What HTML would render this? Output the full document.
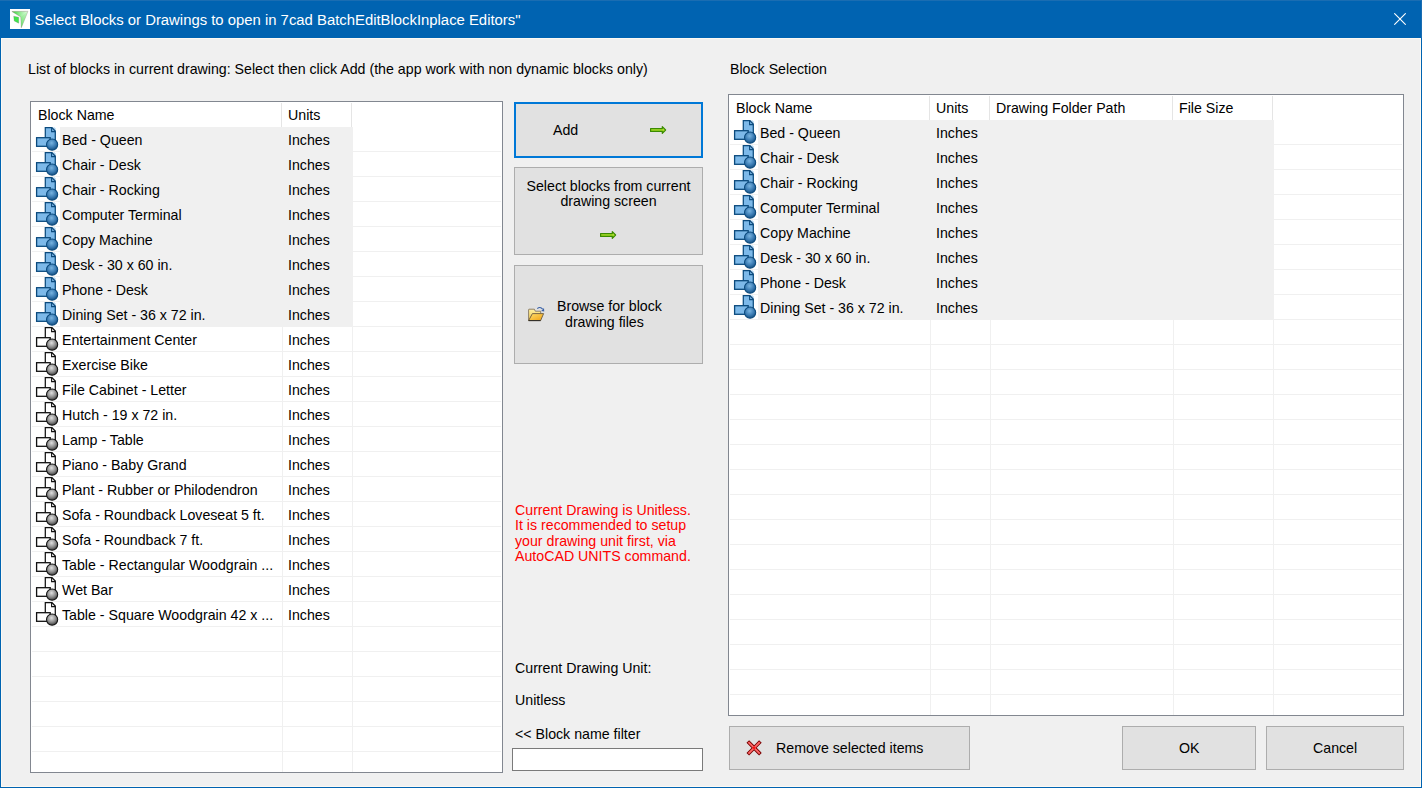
<!DOCTYPE html><html><head><meta charset="utf-8"><style>
*{margin:0;padding:0;box-sizing:border-box}
html,body{width:1422px;height:788px;overflow:hidden;background:#f0f0f0}
body{position:relative;font-family:"Liberation Sans",sans-serif;font-size:14.2px;color:#000}
.a{position:absolute;white-space:pre}
.win{position:absolute;left:0;top:0;width:1422px;height:788px;border:1px solid #0063b1;border-top:none;background:#f0f0f0}
.title{position:absolute;left:0;top:0;width:1422px;height:38px;background:#0063b1}
.lv{position:absolute;background:#fff;border:1px solid #828790;overflow:hidden}
.gl{position:absolute;height:1px;background:#f0f0f0}
.vs{position:absolute;width:1px;background:#e5e5e5}
.sel{position:absolute;background:#f0f0f0}
.btn{position:absolute;background:#e1e1e1;border:1px solid #adadad}
.t{position:absolute;white-space:pre;line-height:16px}
</style></head><body>
<svg width="0" height="0" style="position:absolute"><defs>
<radialGradient id="gb" cx="0.45" cy="0.35" r="0.65"><stop offset="0" stop-color="#79b4e0"/><stop offset="0.6" stop-color="#3a7bb3"/><stop offset="1" stop-color="#164f80"/></radialGradient>
<radialGradient id="gg" cx="0.45" cy="0.35" r="0.65"><stop offset="0" stop-color="#e0e0e0"/><stop offset="0.6" stop-color="#8a8a8a"/><stop offset="1" stop-color="#3a3a3a"/></radialGradient>
<linearGradient id="ag" x1="0" y1="0" x2="0" y2="1"><stop offset="0" stop-color="#d8f850"/><stop offset="1" stop-color="#7cc400"/></linearGradient>
</defs></svg>
<div class="win"></div>
<div class="title"></div>
<div class="a" style="left:0;top:0;width:1422px;height:1px;background:#1a6db2"></div>
<div class="a" style="left:1421px;top:0;width:1px;height:38px;background:#1a6db2"></div>
<div class="a" style="left:1px;top:38px;width:1420px;height:749px;border:1px solid #fcf9f3"></div>
<div class="a" style="left:10px;top:9px;width:20px;height:20px;background:#fff"></div>
<svg class="a" style="left:10px;top:9px" width="20" height="20" viewBox="0 0 20 20"><defs><linearGradient id="tg" x1="0.1" y1="0.2" x2="0.9" y2="0.3"><stop offset="0" stop-color="#48dc48"/><stop offset="0.45" stop-color="#8eea8e"/><stop offset="1" stop-color="#d8f8d8"/></linearGradient><linearGradient id="tg2" x1="0" y1="0" x2="0" y2="1"><stop offset="0" stop-color="#b8f4b8"/><stop offset="1" stop-color="#30d030"/></linearGradient></defs><path d="M1.9 2.5 L17.9 2.3 L11.3 18.7 L10.8 7.9 Z" fill="url(#tg)" stroke="#806a6a" stroke-width="0.35"/><path d="M10.8 7.9 L17.9 2.3 L11.3 18.7 Z" fill="url(#tg2)" opacity="0.55"/><path d="M3.7 7.2 L8.7 8.3 L8.7 14.2 L4.25 11.9 Z" fill="#3ee64a" stroke="#6a7a6a" stroke-width="0.3"/></svg>
<div class="t" style="left:34.5px;top:12px;font-size:14.87px;color:#fff">Select Blocks or Drawings to open in 7cad BatchEditBlockInplace Editors"</div>
<svg class="a" style="left:1394px;top:13px" width="12" height="12" viewBox="0 0 12 12"><path d="M0.3 0.3 L11.7 11.7 M11.7 0.3 L0.3 11.7" stroke="#fff" stroke-width="1.1"/></svg>
<div class="t" style="left:28px;top:61px">List of blocks in current drawing: Select then click Add (the app work with non dynamic blocks only)</div>
<div class="t" style="left:730px;top:61px">Block Selection</div>
<div class="lv" style="left:30px;top:101px;width:473px;height:672px">
<div class="t" style="left:7px;top:5px">Block Name</div>
<div class="t" style="left:257px;top:5px">Units</div>
<div class="vs" style="left:250px;top:1px;height:24px"></div>
<div class="vs" style="left:320px;top:1px;height:24px"></div>
<div class="gl" style="left:1px;top:49px;width:469px"></div>
<div class="vs" style="left:251px;top:25px;height:25px;background:#f0f0f0"></div>
<div class="vs" style="left:321px;top:25px;height:25px;background:#f0f0f0"></div>
<div class="gl" style="left:1px;top:74px;width:469px"></div>
<div class="vs" style="left:251px;top:50px;height:25px;background:#f0f0f0"></div>
<div class="vs" style="left:321px;top:50px;height:25px;background:#f0f0f0"></div>
<div class="gl" style="left:1px;top:99px;width:469px"></div>
<div class="vs" style="left:251px;top:75px;height:25px;background:#f0f0f0"></div>
<div class="vs" style="left:321px;top:75px;height:25px;background:#f0f0f0"></div>
<div class="gl" style="left:1px;top:124px;width:469px"></div>
<div class="vs" style="left:251px;top:100px;height:25px;background:#f0f0f0"></div>
<div class="vs" style="left:321px;top:100px;height:25px;background:#f0f0f0"></div>
<div class="gl" style="left:1px;top:149px;width:469px"></div>
<div class="vs" style="left:251px;top:125px;height:25px;background:#f0f0f0"></div>
<div class="vs" style="left:321px;top:125px;height:25px;background:#f0f0f0"></div>
<div class="gl" style="left:1px;top:174px;width:469px"></div>
<div class="vs" style="left:251px;top:150px;height:25px;background:#f0f0f0"></div>
<div class="vs" style="left:321px;top:150px;height:25px;background:#f0f0f0"></div>
<div class="gl" style="left:1px;top:199px;width:469px"></div>
<div class="vs" style="left:251px;top:175px;height:25px;background:#f0f0f0"></div>
<div class="vs" style="left:321px;top:175px;height:25px;background:#f0f0f0"></div>
<div class="gl" style="left:1px;top:224px;width:469px"></div>
<div class="vs" style="left:251px;top:200px;height:25px;background:#f0f0f0"></div>
<div class="vs" style="left:321px;top:200px;height:25px;background:#f0f0f0"></div>
<div class="gl" style="left:1px;top:249px;width:469px"></div>
<div class="vs" style="left:251px;top:225px;height:25px;background:#f0f0f0"></div>
<div class="vs" style="left:321px;top:225px;height:25px;background:#f0f0f0"></div>
<div class="gl" style="left:1px;top:274px;width:469px"></div>
<div class="vs" style="left:251px;top:250px;height:25px;background:#f0f0f0"></div>
<div class="vs" style="left:321px;top:250px;height:25px;background:#f0f0f0"></div>
<div class="gl" style="left:1px;top:299px;width:469px"></div>
<div class="vs" style="left:251px;top:275px;height:25px;background:#f0f0f0"></div>
<div class="vs" style="left:321px;top:275px;height:25px;background:#f0f0f0"></div>
<div class="gl" style="left:1px;top:324px;width:469px"></div>
<div class="vs" style="left:251px;top:300px;height:25px;background:#f0f0f0"></div>
<div class="vs" style="left:321px;top:300px;height:25px;background:#f0f0f0"></div>
<div class="gl" style="left:1px;top:349px;width:469px"></div>
<div class="vs" style="left:251px;top:325px;height:25px;background:#f0f0f0"></div>
<div class="vs" style="left:321px;top:325px;height:25px;background:#f0f0f0"></div>
<div class="gl" style="left:1px;top:374px;width:469px"></div>
<div class="vs" style="left:251px;top:350px;height:25px;background:#f0f0f0"></div>
<div class="vs" style="left:321px;top:350px;height:25px;background:#f0f0f0"></div>
<div class="gl" style="left:1px;top:399px;width:469px"></div>
<div class="vs" style="left:251px;top:375px;height:25px;background:#f0f0f0"></div>
<div class="vs" style="left:321px;top:375px;height:25px;background:#f0f0f0"></div>
<div class="gl" style="left:1px;top:424px;width:469px"></div>
<div class="vs" style="left:251px;top:400px;height:25px;background:#f0f0f0"></div>
<div class="vs" style="left:321px;top:400px;height:25px;background:#f0f0f0"></div>
<div class="gl" style="left:1px;top:449px;width:469px"></div>
<div class="vs" style="left:251px;top:425px;height:25px;background:#f0f0f0"></div>
<div class="vs" style="left:321px;top:425px;height:25px;background:#f0f0f0"></div>
<div class="gl" style="left:1px;top:474px;width:469px"></div>
<div class="vs" style="left:251px;top:450px;height:25px;background:#f0f0f0"></div>
<div class="vs" style="left:321px;top:450px;height:25px;background:#f0f0f0"></div>
<div class="gl" style="left:1px;top:499px;width:469px"></div>
<div class="vs" style="left:251px;top:475px;height:25px;background:#f0f0f0"></div>
<div class="vs" style="left:321px;top:475px;height:25px;background:#f0f0f0"></div>
<div class="gl" style="left:1px;top:524px;width:469px"></div>
<div class="vs" style="left:251px;top:500px;height:25px;background:#f0f0f0"></div>
<div class="vs" style="left:321px;top:500px;height:25px;background:#f0f0f0"></div>
<div class="gl" style="left:1px;top:549px;width:469px"></div>
<div class="vs" style="left:251px;top:525px;height:25px;background:#f0f0f0"></div>
<div class="vs" style="left:321px;top:525px;height:25px;background:#f0f0f0"></div>
<div class="gl" style="left:1px;top:574px;width:469px"></div>
<div class="vs" style="left:251px;top:550px;height:25px;background:#f0f0f0"></div>
<div class="vs" style="left:321px;top:550px;height:25px;background:#f0f0f0"></div>
<div class="gl" style="left:1px;top:599px;width:469px"></div>
<div class="vs" style="left:251px;top:575px;height:25px;background:#f0f0f0"></div>
<div class="vs" style="left:321px;top:575px;height:25px;background:#f0f0f0"></div>
<div class="gl" style="left:1px;top:624px;width:469px"></div>
<div class="vs" style="left:251px;top:600px;height:25px;background:#f0f0f0"></div>
<div class="vs" style="left:321px;top:600px;height:25px;background:#f0f0f0"></div>
<div class="gl" style="left:1px;top:649px;width:469px"></div>
<div class="vs" style="left:251px;top:625px;height:25px;background:#f0f0f0"></div>
<div class="vs" style="left:321px;top:625px;height:25px;background:#f0f0f0"></div>
<div class="gl" style="left:1px;top:674px;width:469px"></div>
<div class="vs" style="left:251px;top:650px;height:25px;background:#f0f0f0"></div>
<div class="vs" style="left:321px;top:650px;height:25px;background:#f0f0f0"></div>
<div class="gl" style="left:1px;top:699px;width:469px"></div>
<div class="vs" style="left:251px;top:675px;height:25px;background:#f0f0f0"></div>
<div class="vs" style="left:321px;top:675px;height:25px;background:#f0f0f0"></div>
<div class="sel" style="left:29px;top:25px;width:293px;height:24px"></div>
<svg class="a" style="left:0px;top:25px" width="28" height="25" viewBox="0 0 28 25"><path d="M14.3 17 V0.7 H21 L24.3 4 V15 Z" fill="#7db9e9"/><path d="M22.6 0.3 L24.9 2.4" stroke="#8cc4f0" stroke-width="1"/><path d="M14.3 17 V0.7 H21 L24.3 4 V15" fill="none" stroke="#0b4a7d" stroke-width="1.25"/><path d="M20.6 0.7 V4.6 H24.3" fill="none" stroke="#0b4a7d" stroke-width="1.1"/><rect x="5.6" y="10.7" width="13.6" height="8.6" fill="#7db9e9" stroke="#0b4a7d" stroke-width="1.3"/><circle cx="21.1" cy="17.6" r="5.6" fill="url(#gb)" stroke="#0b4a7d" stroke-width="1.05"/></svg>
<div class="t" style="left:31px;top:30px">Bed - Queen</div>
<div class="t" style="left:257px;top:30px">Inches</div>
<div class="sel" style="left:29px;top:50px;width:293px;height:24px"></div>
<svg class="a" style="left:0px;top:50px" width="28" height="25" viewBox="0 0 28 25"><path d="M14.3 17 V0.7 H21 L24.3 4 V15 Z" fill="#7db9e9"/><path d="M22.6 0.3 L24.9 2.4" stroke="#8cc4f0" stroke-width="1"/><path d="M14.3 17 V0.7 H21 L24.3 4 V15" fill="none" stroke="#0b4a7d" stroke-width="1.25"/><path d="M20.6 0.7 V4.6 H24.3" fill="none" stroke="#0b4a7d" stroke-width="1.1"/><rect x="5.6" y="10.7" width="13.6" height="8.6" fill="#7db9e9" stroke="#0b4a7d" stroke-width="1.3"/><circle cx="21.1" cy="17.6" r="5.6" fill="url(#gb)" stroke="#0b4a7d" stroke-width="1.05"/></svg>
<div class="t" style="left:31px;top:55px">Chair - Desk</div>
<div class="t" style="left:257px;top:55px">Inches</div>
<div class="sel" style="left:29px;top:75px;width:293px;height:24px"></div>
<svg class="a" style="left:0px;top:75px" width="28" height="25" viewBox="0 0 28 25"><path d="M14.3 17 V0.7 H21 L24.3 4 V15 Z" fill="#7db9e9"/><path d="M22.6 0.3 L24.9 2.4" stroke="#8cc4f0" stroke-width="1"/><path d="M14.3 17 V0.7 H21 L24.3 4 V15" fill="none" stroke="#0b4a7d" stroke-width="1.25"/><path d="M20.6 0.7 V4.6 H24.3" fill="none" stroke="#0b4a7d" stroke-width="1.1"/><rect x="5.6" y="10.7" width="13.6" height="8.6" fill="#7db9e9" stroke="#0b4a7d" stroke-width="1.3"/><circle cx="21.1" cy="17.6" r="5.6" fill="url(#gb)" stroke="#0b4a7d" stroke-width="1.05"/></svg>
<div class="t" style="left:31px;top:80px">Chair - Rocking</div>
<div class="t" style="left:257px;top:80px">Inches</div>
<div class="sel" style="left:29px;top:100px;width:293px;height:24px"></div>
<svg class="a" style="left:0px;top:100px" width="28" height="25" viewBox="0 0 28 25"><path d="M14.3 17 V0.7 H21 L24.3 4 V15 Z" fill="#7db9e9"/><path d="M22.6 0.3 L24.9 2.4" stroke="#8cc4f0" stroke-width="1"/><path d="M14.3 17 V0.7 H21 L24.3 4 V15" fill="none" stroke="#0b4a7d" stroke-width="1.25"/><path d="M20.6 0.7 V4.6 H24.3" fill="none" stroke="#0b4a7d" stroke-width="1.1"/><rect x="5.6" y="10.7" width="13.6" height="8.6" fill="#7db9e9" stroke="#0b4a7d" stroke-width="1.3"/><circle cx="21.1" cy="17.6" r="5.6" fill="url(#gb)" stroke="#0b4a7d" stroke-width="1.05"/></svg>
<div class="t" style="left:31px;top:105px">Computer Terminal</div>
<div class="t" style="left:257px;top:105px">Inches</div>
<div class="sel" style="left:29px;top:125px;width:293px;height:24px"></div>
<svg class="a" style="left:0px;top:125px" width="28" height="25" viewBox="0 0 28 25"><path d="M14.3 17 V0.7 H21 L24.3 4 V15 Z" fill="#7db9e9"/><path d="M22.6 0.3 L24.9 2.4" stroke="#8cc4f0" stroke-width="1"/><path d="M14.3 17 V0.7 H21 L24.3 4 V15" fill="none" stroke="#0b4a7d" stroke-width="1.25"/><path d="M20.6 0.7 V4.6 H24.3" fill="none" stroke="#0b4a7d" stroke-width="1.1"/><rect x="5.6" y="10.7" width="13.6" height="8.6" fill="#7db9e9" stroke="#0b4a7d" stroke-width="1.3"/><circle cx="21.1" cy="17.6" r="5.6" fill="url(#gb)" stroke="#0b4a7d" stroke-width="1.05"/></svg>
<div class="t" style="left:31px;top:130px">Copy Machine</div>
<div class="t" style="left:257px;top:130px">Inches</div>
<div class="sel" style="left:29px;top:150px;width:293px;height:24px"></div>
<svg class="a" style="left:0px;top:150px" width="28" height="25" viewBox="0 0 28 25"><path d="M14.3 17 V0.7 H21 L24.3 4 V15 Z" fill="#7db9e9"/><path d="M22.6 0.3 L24.9 2.4" stroke="#8cc4f0" stroke-width="1"/><path d="M14.3 17 V0.7 H21 L24.3 4 V15" fill="none" stroke="#0b4a7d" stroke-width="1.25"/><path d="M20.6 0.7 V4.6 H24.3" fill="none" stroke="#0b4a7d" stroke-width="1.1"/><rect x="5.6" y="10.7" width="13.6" height="8.6" fill="#7db9e9" stroke="#0b4a7d" stroke-width="1.3"/><circle cx="21.1" cy="17.6" r="5.6" fill="url(#gb)" stroke="#0b4a7d" stroke-width="1.05"/></svg>
<div class="t" style="left:31px;top:155px">Desk - 30 x 60 in.</div>
<div class="t" style="left:257px;top:155px">Inches</div>
<div class="sel" style="left:29px;top:175px;width:293px;height:24px"></div>
<svg class="a" style="left:0px;top:175px" width="28" height="25" viewBox="0 0 28 25"><path d="M14.3 17 V0.7 H21 L24.3 4 V15 Z" fill="#7db9e9"/><path d="M22.6 0.3 L24.9 2.4" stroke="#8cc4f0" stroke-width="1"/><path d="M14.3 17 V0.7 H21 L24.3 4 V15" fill="none" stroke="#0b4a7d" stroke-width="1.25"/><path d="M20.6 0.7 V4.6 H24.3" fill="none" stroke="#0b4a7d" stroke-width="1.1"/><rect x="5.6" y="10.7" width="13.6" height="8.6" fill="#7db9e9" stroke="#0b4a7d" stroke-width="1.3"/><circle cx="21.1" cy="17.6" r="5.6" fill="url(#gb)" stroke="#0b4a7d" stroke-width="1.05"/></svg>
<div class="t" style="left:31px;top:180px">Phone - Desk</div>
<div class="t" style="left:257px;top:180px">Inches</div>
<div class="sel" style="left:29px;top:200px;width:293px;height:24px"></div>
<svg class="a" style="left:0px;top:200px" width="28" height="25" viewBox="0 0 28 25"><path d="M14.3 17 V0.7 H21 L24.3 4 V15 Z" fill="#7db9e9"/><path d="M22.6 0.3 L24.9 2.4" stroke="#8cc4f0" stroke-width="1"/><path d="M14.3 17 V0.7 H21 L24.3 4 V15" fill="none" stroke="#0b4a7d" stroke-width="1.25"/><path d="M20.6 0.7 V4.6 H24.3" fill="none" stroke="#0b4a7d" stroke-width="1.1"/><rect x="5.6" y="10.7" width="13.6" height="8.6" fill="#7db9e9" stroke="#0b4a7d" stroke-width="1.3"/><circle cx="21.1" cy="17.6" r="5.6" fill="url(#gb)" stroke="#0b4a7d" stroke-width="1.05"/></svg>
<div class="t" style="left:31px;top:205px">Dining Set - 36 x 72 in.</div>
<div class="t" style="left:257px;top:205px">Inches</div>
<svg class="a" style="left:0px;top:225px" width="28" height="25" viewBox="0 0 28 25"><path d="M14.3 17 V0.7 H21 L24.3 4 V15 Z" fill="#ffffff"/><path d="M22.6 0.3 L24.9 2.4" stroke="none" stroke-width="1"/><path d="M14.3 17 V0.7 H21 L24.3 4 V15" fill="none" stroke="#111" stroke-width="1.25"/><path d="M20.6 0.7 V4.6 H24.3" fill="none" stroke="#111" stroke-width="1.1"/><rect x="5.6" y="10.7" width="13.6" height="8.6" fill="#ffffff" stroke="#111" stroke-width="1.3"/><circle cx="21.1" cy="17.6" r="5.6" fill="url(#gg)" stroke="#111" stroke-width="1.05"/></svg>
<div class="t" style="left:31px;top:230px">Entertainment Center</div>
<div class="t" style="left:257px;top:230px">Inches</div>
<svg class="a" style="left:0px;top:250px" width="28" height="25" viewBox="0 0 28 25"><path d="M14.3 17 V0.7 H21 L24.3 4 V15 Z" fill="#ffffff"/><path d="M22.6 0.3 L24.9 2.4" stroke="none" stroke-width="1"/><path d="M14.3 17 V0.7 H21 L24.3 4 V15" fill="none" stroke="#111" stroke-width="1.25"/><path d="M20.6 0.7 V4.6 H24.3" fill="none" stroke="#111" stroke-width="1.1"/><rect x="5.6" y="10.7" width="13.6" height="8.6" fill="#ffffff" stroke="#111" stroke-width="1.3"/><circle cx="21.1" cy="17.6" r="5.6" fill="url(#gg)" stroke="#111" stroke-width="1.05"/></svg>
<div class="t" style="left:31px;top:255px">Exercise Bike</div>
<div class="t" style="left:257px;top:255px">Inches</div>
<svg class="a" style="left:0px;top:275px" width="28" height="25" viewBox="0 0 28 25"><path d="M14.3 17 V0.7 H21 L24.3 4 V15 Z" fill="#ffffff"/><path d="M22.6 0.3 L24.9 2.4" stroke="none" stroke-width="1"/><path d="M14.3 17 V0.7 H21 L24.3 4 V15" fill="none" stroke="#111" stroke-width="1.25"/><path d="M20.6 0.7 V4.6 H24.3" fill="none" stroke="#111" stroke-width="1.1"/><rect x="5.6" y="10.7" width="13.6" height="8.6" fill="#ffffff" stroke="#111" stroke-width="1.3"/><circle cx="21.1" cy="17.6" r="5.6" fill="url(#gg)" stroke="#111" stroke-width="1.05"/></svg>
<div class="t" style="left:31px;top:280px">File Cabinet - Letter</div>
<div class="t" style="left:257px;top:280px">Inches</div>
<svg class="a" style="left:0px;top:300px" width="28" height="25" viewBox="0 0 28 25"><path d="M14.3 17 V0.7 H21 L24.3 4 V15 Z" fill="#ffffff"/><path d="M22.6 0.3 L24.9 2.4" stroke="none" stroke-width="1"/><path d="M14.3 17 V0.7 H21 L24.3 4 V15" fill="none" stroke="#111" stroke-width="1.25"/><path d="M20.6 0.7 V4.6 H24.3" fill="none" stroke="#111" stroke-width="1.1"/><rect x="5.6" y="10.7" width="13.6" height="8.6" fill="#ffffff" stroke="#111" stroke-width="1.3"/><circle cx="21.1" cy="17.6" r="5.6" fill="url(#gg)" stroke="#111" stroke-width="1.05"/></svg>
<div class="t" style="left:31px;top:305px">Hutch - 19 x 72 in.</div>
<div class="t" style="left:257px;top:305px">Inches</div>
<svg class="a" style="left:0px;top:325px" width="28" height="25" viewBox="0 0 28 25"><path d="M14.3 17 V0.7 H21 L24.3 4 V15 Z" fill="#ffffff"/><path d="M22.6 0.3 L24.9 2.4" stroke="none" stroke-width="1"/><path d="M14.3 17 V0.7 H21 L24.3 4 V15" fill="none" stroke="#111" stroke-width="1.25"/><path d="M20.6 0.7 V4.6 H24.3" fill="none" stroke="#111" stroke-width="1.1"/><rect x="5.6" y="10.7" width="13.6" height="8.6" fill="#ffffff" stroke="#111" stroke-width="1.3"/><circle cx="21.1" cy="17.6" r="5.6" fill="url(#gg)" stroke="#111" stroke-width="1.05"/></svg>
<div class="t" style="left:31px;top:330px">Lamp - Table</div>
<div class="t" style="left:257px;top:330px">Inches</div>
<svg class="a" style="left:0px;top:350px" width="28" height="25" viewBox="0 0 28 25"><path d="M14.3 17 V0.7 H21 L24.3 4 V15 Z" fill="#ffffff"/><path d="M22.6 0.3 L24.9 2.4" stroke="none" stroke-width="1"/><path d="M14.3 17 V0.7 H21 L24.3 4 V15" fill="none" stroke="#111" stroke-width="1.25"/><path d="M20.6 0.7 V4.6 H24.3" fill="none" stroke="#111" stroke-width="1.1"/><rect x="5.6" y="10.7" width="13.6" height="8.6" fill="#ffffff" stroke="#111" stroke-width="1.3"/><circle cx="21.1" cy="17.6" r="5.6" fill="url(#gg)" stroke="#111" stroke-width="1.05"/></svg>
<div class="t" style="left:31px;top:355px">Piano - Baby Grand</div>
<div class="t" style="left:257px;top:355px">Inches</div>
<svg class="a" style="left:0px;top:375px" width="28" height="25" viewBox="0 0 28 25"><path d="M14.3 17 V0.7 H21 L24.3 4 V15 Z" fill="#ffffff"/><path d="M22.6 0.3 L24.9 2.4" stroke="none" stroke-width="1"/><path d="M14.3 17 V0.7 H21 L24.3 4 V15" fill="none" stroke="#111" stroke-width="1.25"/><path d="M20.6 0.7 V4.6 H24.3" fill="none" stroke="#111" stroke-width="1.1"/><rect x="5.6" y="10.7" width="13.6" height="8.6" fill="#ffffff" stroke="#111" stroke-width="1.3"/><circle cx="21.1" cy="17.6" r="5.6" fill="url(#gg)" stroke="#111" stroke-width="1.05"/></svg>
<div class="t" style="left:31px;top:380px">Plant - Rubber or Philodendron</div>
<div class="t" style="left:257px;top:380px">Inches</div>
<svg class="a" style="left:0px;top:400px" width="28" height="25" viewBox="0 0 28 25"><path d="M14.3 17 V0.7 H21 L24.3 4 V15 Z" fill="#ffffff"/><path d="M22.6 0.3 L24.9 2.4" stroke="none" stroke-width="1"/><path d="M14.3 17 V0.7 H21 L24.3 4 V15" fill="none" stroke="#111" stroke-width="1.25"/><path d="M20.6 0.7 V4.6 H24.3" fill="none" stroke="#111" stroke-width="1.1"/><rect x="5.6" y="10.7" width="13.6" height="8.6" fill="#ffffff" stroke="#111" stroke-width="1.3"/><circle cx="21.1" cy="17.6" r="5.6" fill="url(#gg)" stroke="#111" stroke-width="1.05"/></svg>
<div class="t" style="left:31px;top:405px">Sofa - Roundback Loveseat 5 ft.</div>
<div class="t" style="left:257px;top:405px">Inches</div>
<svg class="a" style="left:0px;top:425px" width="28" height="25" viewBox="0 0 28 25"><path d="M14.3 17 V0.7 H21 L24.3 4 V15 Z" fill="#ffffff"/><path d="M22.6 0.3 L24.9 2.4" stroke="none" stroke-width="1"/><path d="M14.3 17 V0.7 H21 L24.3 4 V15" fill="none" stroke="#111" stroke-width="1.25"/><path d="M20.6 0.7 V4.6 H24.3" fill="none" stroke="#111" stroke-width="1.1"/><rect x="5.6" y="10.7" width="13.6" height="8.6" fill="#ffffff" stroke="#111" stroke-width="1.3"/><circle cx="21.1" cy="17.6" r="5.6" fill="url(#gg)" stroke="#111" stroke-width="1.05"/></svg>
<div class="t" style="left:31px;top:430px">Sofa - Roundback 7 ft.</div>
<div class="t" style="left:257px;top:430px">Inches</div>
<svg class="a" style="left:0px;top:450px" width="28" height="25" viewBox="0 0 28 25"><path d="M14.3 17 V0.7 H21 L24.3 4 V15 Z" fill="#ffffff"/><path d="M22.6 0.3 L24.9 2.4" stroke="none" stroke-width="1"/><path d="M14.3 17 V0.7 H21 L24.3 4 V15" fill="none" stroke="#111" stroke-width="1.25"/><path d="M20.6 0.7 V4.6 H24.3" fill="none" stroke="#111" stroke-width="1.1"/><rect x="5.6" y="10.7" width="13.6" height="8.6" fill="#ffffff" stroke="#111" stroke-width="1.3"/><circle cx="21.1" cy="17.6" r="5.6" fill="url(#gg)" stroke="#111" stroke-width="1.05"/></svg>
<div class="t" style="left:31px;top:455px">Table - Rectangular Woodgrain ...</div>
<div class="t" style="left:257px;top:455px">Inches</div>
<svg class="a" style="left:0px;top:475px" width="28" height="25" viewBox="0 0 28 25"><path d="M14.3 17 V0.7 H21 L24.3 4 V15 Z" fill="#ffffff"/><path d="M22.6 0.3 L24.9 2.4" stroke="none" stroke-width="1"/><path d="M14.3 17 V0.7 H21 L24.3 4 V15" fill="none" stroke="#111" stroke-width="1.25"/><path d="M20.6 0.7 V4.6 H24.3" fill="none" stroke="#111" stroke-width="1.1"/><rect x="5.6" y="10.7" width="13.6" height="8.6" fill="#ffffff" stroke="#111" stroke-width="1.3"/><circle cx="21.1" cy="17.6" r="5.6" fill="url(#gg)" stroke="#111" stroke-width="1.05"/></svg>
<div class="t" style="left:31px;top:480px">Wet Bar</div>
<div class="t" style="left:257px;top:480px">Inches</div>
<svg class="a" style="left:0px;top:500px" width="28" height="25" viewBox="0 0 28 25"><path d="M14.3 17 V0.7 H21 L24.3 4 V15 Z" fill="#ffffff"/><path d="M22.6 0.3 L24.9 2.4" stroke="none" stroke-width="1"/><path d="M14.3 17 V0.7 H21 L24.3 4 V15" fill="none" stroke="#111" stroke-width="1.25"/><path d="M20.6 0.7 V4.6 H24.3" fill="none" stroke="#111" stroke-width="1.1"/><rect x="5.6" y="10.7" width="13.6" height="8.6" fill="#ffffff" stroke="#111" stroke-width="1.3"/><circle cx="21.1" cy="17.6" r="5.6" fill="url(#gg)" stroke="#111" stroke-width="1.05"/></svg>
<div class="t" style="left:31px;top:505px">Table - Square Woodgrain 42 x ...</div>
<div class="t" style="left:257px;top:505px">Inches</div>
</div>
<div class="lv" style="left:728px;top:94px;width:676px;height:622px">
<div class="t" style="left:7px;top:5px">Block Name</div>
<div class="t" style="left:207px;top:5px">Units</div>
<div class="t" style="left:267px;top:5px">Drawing Folder Path</div>
<div class="t" style="left:450px;top:5px">File Size</div>
<div class="vs" style="left:200px;top:1px;height:24px"></div>
<div class="vs" style="left:260px;top:1px;height:24px"></div>
<div class="vs" style="left:443px;top:1px;height:24px"></div>
<div class="vs" style="left:543px;top:1px;height:24px"></div>
<div class="gl" style="left:1px;top:49px;width:672px"></div>
<div class="vs" style="left:201px;top:25px;height:25px;background:#f0f0f0"></div>
<div class="vs" style="left:261px;top:25px;height:25px;background:#f0f0f0"></div>
<div class="vs" style="left:444px;top:25px;height:25px;background:#f0f0f0"></div>
<div class="vs" style="left:544px;top:25px;height:25px;background:#f0f0f0"></div>
<div class="gl" style="left:1px;top:74px;width:672px"></div>
<div class="vs" style="left:201px;top:50px;height:25px;background:#f0f0f0"></div>
<div class="vs" style="left:261px;top:50px;height:25px;background:#f0f0f0"></div>
<div class="vs" style="left:444px;top:50px;height:25px;background:#f0f0f0"></div>
<div class="vs" style="left:544px;top:50px;height:25px;background:#f0f0f0"></div>
<div class="gl" style="left:1px;top:99px;width:672px"></div>
<div class="vs" style="left:201px;top:75px;height:25px;background:#f0f0f0"></div>
<div class="vs" style="left:261px;top:75px;height:25px;background:#f0f0f0"></div>
<div class="vs" style="left:444px;top:75px;height:25px;background:#f0f0f0"></div>
<div class="vs" style="left:544px;top:75px;height:25px;background:#f0f0f0"></div>
<div class="gl" style="left:1px;top:124px;width:672px"></div>
<div class="vs" style="left:201px;top:100px;height:25px;background:#f0f0f0"></div>
<div class="vs" style="left:261px;top:100px;height:25px;background:#f0f0f0"></div>
<div class="vs" style="left:444px;top:100px;height:25px;background:#f0f0f0"></div>
<div class="vs" style="left:544px;top:100px;height:25px;background:#f0f0f0"></div>
<div class="gl" style="left:1px;top:149px;width:672px"></div>
<div class="vs" style="left:201px;top:125px;height:25px;background:#f0f0f0"></div>
<div class="vs" style="left:261px;top:125px;height:25px;background:#f0f0f0"></div>
<div class="vs" style="left:444px;top:125px;height:25px;background:#f0f0f0"></div>
<div class="vs" style="left:544px;top:125px;height:25px;background:#f0f0f0"></div>
<div class="gl" style="left:1px;top:174px;width:672px"></div>
<div class="vs" style="left:201px;top:150px;height:25px;background:#f0f0f0"></div>
<div class="vs" style="left:261px;top:150px;height:25px;background:#f0f0f0"></div>
<div class="vs" style="left:444px;top:150px;height:25px;background:#f0f0f0"></div>
<div class="vs" style="left:544px;top:150px;height:25px;background:#f0f0f0"></div>
<div class="gl" style="left:1px;top:199px;width:672px"></div>
<div class="vs" style="left:201px;top:175px;height:25px;background:#f0f0f0"></div>
<div class="vs" style="left:261px;top:175px;height:25px;background:#f0f0f0"></div>
<div class="vs" style="left:444px;top:175px;height:25px;background:#f0f0f0"></div>
<div class="vs" style="left:544px;top:175px;height:25px;background:#f0f0f0"></div>
<div class="gl" style="left:1px;top:224px;width:672px"></div>
<div class="vs" style="left:201px;top:200px;height:25px;background:#f0f0f0"></div>
<div class="vs" style="left:261px;top:200px;height:25px;background:#f0f0f0"></div>
<div class="vs" style="left:444px;top:200px;height:25px;background:#f0f0f0"></div>
<div class="vs" style="left:544px;top:200px;height:25px;background:#f0f0f0"></div>
<div class="gl" style="left:1px;top:249px;width:672px"></div>
<div class="vs" style="left:201px;top:225px;height:25px;background:#f0f0f0"></div>
<div class="vs" style="left:261px;top:225px;height:25px;background:#f0f0f0"></div>
<div class="vs" style="left:444px;top:225px;height:25px;background:#f0f0f0"></div>
<div class="vs" style="left:544px;top:225px;height:25px;background:#f0f0f0"></div>
<div class="gl" style="left:1px;top:274px;width:672px"></div>
<div class="vs" style="left:201px;top:250px;height:25px;background:#f0f0f0"></div>
<div class="vs" style="left:261px;top:250px;height:25px;background:#f0f0f0"></div>
<div class="vs" style="left:444px;top:250px;height:25px;background:#f0f0f0"></div>
<div class="vs" style="left:544px;top:250px;height:25px;background:#f0f0f0"></div>
<div class="gl" style="left:1px;top:299px;width:672px"></div>
<div class="vs" style="left:201px;top:275px;height:25px;background:#f0f0f0"></div>
<div class="vs" style="left:261px;top:275px;height:25px;background:#f0f0f0"></div>
<div class="vs" style="left:444px;top:275px;height:25px;background:#f0f0f0"></div>
<div class="vs" style="left:544px;top:275px;height:25px;background:#f0f0f0"></div>
<div class="gl" style="left:1px;top:324px;width:672px"></div>
<div class="vs" style="left:201px;top:300px;height:25px;background:#f0f0f0"></div>
<div class="vs" style="left:261px;top:300px;height:25px;background:#f0f0f0"></div>
<div class="vs" style="left:444px;top:300px;height:25px;background:#f0f0f0"></div>
<div class="vs" style="left:544px;top:300px;height:25px;background:#f0f0f0"></div>
<div class="gl" style="left:1px;top:349px;width:672px"></div>
<div class="vs" style="left:201px;top:325px;height:25px;background:#f0f0f0"></div>
<div class="vs" style="left:261px;top:325px;height:25px;background:#f0f0f0"></div>
<div class="vs" style="left:444px;top:325px;height:25px;background:#f0f0f0"></div>
<div class="vs" style="left:544px;top:325px;height:25px;background:#f0f0f0"></div>
<div class="gl" style="left:1px;top:374px;width:672px"></div>
<div class="vs" style="left:201px;top:350px;height:25px;background:#f0f0f0"></div>
<div class="vs" style="left:261px;top:350px;height:25px;background:#f0f0f0"></div>
<div class="vs" style="left:444px;top:350px;height:25px;background:#f0f0f0"></div>
<div class="vs" style="left:544px;top:350px;height:25px;background:#f0f0f0"></div>
<div class="gl" style="left:1px;top:399px;width:672px"></div>
<div class="vs" style="left:201px;top:375px;height:25px;background:#f0f0f0"></div>
<div class="vs" style="left:261px;top:375px;height:25px;background:#f0f0f0"></div>
<div class="vs" style="left:444px;top:375px;height:25px;background:#f0f0f0"></div>
<div class="vs" style="left:544px;top:375px;height:25px;background:#f0f0f0"></div>
<div class="gl" style="left:1px;top:424px;width:672px"></div>
<div class="vs" style="left:201px;top:400px;height:25px;background:#f0f0f0"></div>
<div class="vs" style="left:261px;top:400px;height:25px;background:#f0f0f0"></div>
<div class="vs" style="left:444px;top:400px;height:25px;background:#f0f0f0"></div>
<div class="vs" style="left:544px;top:400px;height:25px;background:#f0f0f0"></div>
<div class="gl" style="left:1px;top:449px;width:672px"></div>
<div class="vs" style="left:201px;top:425px;height:25px;background:#f0f0f0"></div>
<div class="vs" style="left:261px;top:425px;height:25px;background:#f0f0f0"></div>
<div class="vs" style="left:444px;top:425px;height:25px;background:#f0f0f0"></div>
<div class="vs" style="left:544px;top:425px;height:25px;background:#f0f0f0"></div>
<div class="gl" style="left:1px;top:474px;width:672px"></div>
<div class="vs" style="left:201px;top:450px;height:25px;background:#f0f0f0"></div>
<div class="vs" style="left:261px;top:450px;height:25px;background:#f0f0f0"></div>
<div class="vs" style="left:444px;top:450px;height:25px;background:#f0f0f0"></div>
<div class="vs" style="left:544px;top:450px;height:25px;background:#f0f0f0"></div>
<div class="gl" style="left:1px;top:499px;width:672px"></div>
<div class="vs" style="left:201px;top:475px;height:25px;background:#f0f0f0"></div>
<div class="vs" style="left:261px;top:475px;height:25px;background:#f0f0f0"></div>
<div class="vs" style="left:444px;top:475px;height:25px;background:#f0f0f0"></div>
<div class="vs" style="left:544px;top:475px;height:25px;background:#f0f0f0"></div>
<div class="gl" style="left:1px;top:524px;width:672px"></div>
<div class="vs" style="left:201px;top:500px;height:25px;background:#f0f0f0"></div>
<div class="vs" style="left:261px;top:500px;height:25px;background:#f0f0f0"></div>
<div class="vs" style="left:444px;top:500px;height:25px;background:#f0f0f0"></div>
<div class="vs" style="left:544px;top:500px;height:25px;background:#f0f0f0"></div>
<div class="gl" style="left:1px;top:549px;width:672px"></div>
<div class="vs" style="left:201px;top:525px;height:25px;background:#f0f0f0"></div>
<div class="vs" style="left:261px;top:525px;height:25px;background:#f0f0f0"></div>
<div class="vs" style="left:444px;top:525px;height:25px;background:#f0f0f0"></div>
<div class="vs" style="left:544px;top:525px;height:25px;background:#f0f0f0"></div>
<div class="gl" style="left:1px;top:574px;width:672px"></div>
<div class="vs" style="left:201px;top:550px;height:25px;background:#f0f0f0"></div>
<div class="vs" style="left:261px;top:550px;height:25px;background:#f0f0f0"></div>
<div class="vs" style="left:444px;top:550px;height:25px;background:#f0f0f0"></div>
<div class="vs" style="left:544px;top:550px;height:25px;background:#f0f0f0"></div>
<div class="gl" style="left:1px;top:599px;width:672px"></div>
<div class="vs" style="left:201px;top:575px;height:25px;background:#f0f0f0"></div>
<div class="vs" style="left:261px;top:575px;height:25px;background:#f0f0f0"></div>
<div class="vs" style="left:444px;top:575px;height:25px;background:#f0f0f0"></div>
<div class="vs" style="left:544px;top:575px;height:25px;background:#f0f0f0"></div>
<div class="gl" style="left:1px;top:624px;width:672px"></div>
<div class="vs" style="left:201px;top:600px;height:25px;background:#f0f0f0"></div>
<div class="vs" style="left:261px;top:600px;height:25px;background:#f0f0f0"></div>
<div class="vs" style="left:444px;top:600px;height:25px;background:#f0f0f0"></div>
<div class="vs" style="left:544px;top:600px;height:25px;background:#f0f0f0"></div>
<div class="gl" style="left:1px;top:649px;width:672px"></div>
<div class="vs" style="left:201px;top:625px;height:25px;background:#f0f0f0"></div>
<div class="vs" style="left:261px;top:625px;height:25px;background:#f0f0f0"></div>
<div class="vs" style="left:444px;top:625px;height:25px;background:#f0f0f0"></div>
<div class="vs" style="left:544px;top:625px;height:25px;background:#f0f0f0"></div>
<div class="sel" style="left:29px;top:25px;width:516px;height:24px"></div>
<svg class="a" style="left:0px;top:25px" width="28" height="25" viewBox="0 0 28 25"><path d="M14.3 17 V0.7 H21 L24.3 4 V15 Z" fill="#7db9e9"/><path d="M22.6 0.3 L24.9 2.4" stroke="#8cc4f0" stroke-width="1"/><path d="M14.3 17 V0.7 H21 L24.3 4 V15" fill="none" stroke="#0b4a7d" stroke-width="1.25"/><path d="M20.6 0.7 V4.6 H24.3" fill="none" stroke="#0b4a7d" stroke-width="1.1"/><rect x="5.6" y="10.7" width="13.6" height="8.6" fill="#7db9e9" stroke="#0b4a7d" stroke-width="1.3"/><circle cx="21.1" cy="17.6" r="5.6" fill="url(#gb)" stroke="#0b4a7d" stroke-width="1.05"/></svg>
<div class="t" style="left:31px;top:30px">Bed - Queen</div>
<div class="t" style="left:207px;top:30px">Inches</div>
<div class="sel" style="left:29px;top:50px;width:516px;height:24px"></div>
<svg class="a" style="left:0px;top:50px" width="28" height="25" viewBox="0 0 28 25"><path d="M14.3 17 V0.7 H21 L24.3 4 V15 Z" fill="#7db9e9"/><path d="M22.6 0.3 L24.9 2.4" stroke="#8cc4f0" stroke-width="1"/><path d="M14.3 17 V0.7 H21 L24.3 4 V15" fill="none" stroke="#0b4a7d" stroke-width="1.25"/><path d="M20.6 0.7 V4.6 H24.3" fill="none" stroke="#0b4a7d" stroke-width="1.1"/><rect x="5.6" y="10.7" width="13.6" height="8.6" fill="#7db9e9" stroke="#0b4a7d" stroke-width="1.3"/><circle cx="21.1" cy="17.6" r="5.6" fill="url(#gb)" stroke="#0b4a7d" stroke-width="1.05"/></svg>
<div class="t" style="left:31px;top:55px">Chair - Desk</div>
<div class="t" style="left:207px;top:55px">Inches</div>
<div class="sel" style="left:29px;top:75px;width:516px;height:24px"></div>
<svg class="a" style="left:0px;top:75px" width="28" height="25" viewBox="0 0 28 25"><path d="M14.3 17 V0.7 H21 L24.3 4 V15 Z" fill="#7db9e9"/><path d="M22.6 0.3 L24.9 2.4" stroke="#8cc4f0" stroke-width="1"/><path d="M14.3 17 V0.7 H21 L24.3 4 V15" fill="none" stroke="#0b4a7d" stroke-width="1.25"/><path d="M20.6 0.7 V4.6 H24.3" fill="none" stroke="#0b4a7d" stroke-width="1.1"/><rect x="5.6" y="10.7" width="13.6" height="8.6" fill="#7db9e9" stroke="#0b4a7d" stroke-width="1.3"/><circle cx="21.1" cy="17.6" r="5.6" fill="url(#gb)" stroke="#0b4a7d" stroke-width="1.05"/></svg>
<div class="t" style="left:31px;top:80px">Chair - Rocking</div>
<div class="t" style="left:207px;top:80px">Inches</div>
<div class="sel" style="left:29px;top:100px;width:516px;height:24px"></div>
<svg class="a" style="left:0px;top:100px" width="28" height="25" viewBox="0 0 28 25"><path d="M14.3 17 V0.7 H21 L24.3 4 V15 Z" fill="#7db9e9"/><path d="M22.6 0.3 L24.9 2.4" stroke="#8cc4f0" stroke-width="1"/><path d="M14.3 17 V0.7 H21 L24.3 4 V15" fill="none" stroke="#0b4a7d" stroke-width="1.25"/><path d="M20.6 0.7 V4.6 H24.3" fill="none" stroke="#0b4a7d" stroke-width="1.1"/><rect x="5.6" y="10.7" width="13.6" height="8.6" fill="#7db9e9" stroke="#0b4a7d" stroke-width="1.3"/><circle cx="21.1" cy="17.6" r="5.6" fill="url(#gb)" stroke="#0b4a7d" stroke-width="1.05"/></svg>
<div class="t" style="left:31px;top:105px">Computer Terminal</div>
<div class="t" style="left:207px;top:105px">Inches</div>
<div class="sel" style="left:29px;top:125px;width:516px;height:24px"></div>
<svg class="a" style="left:0px;top:125px" width="28" height="25" viewBox="0 0 28 25"><path d="M14.3 17 V0.7 H21 L24.3 4 V15 Z" fill="#7db9e9"/><path d="M22.6 0.3 L24.9 2.4" stroke="#8cc4f0" stroke-width="1"/><path d="M14.3 17 V0.7 H21 L24.3 4 V15" fill="none" stroke="#0b4a7d" stroke-width="1.25"/><path d="M20.6 0.7 V4.6 H24.3" fill="none" stroke="#0b4a7d" stroke-width="1.1"/><rect x="5.6" y="10.7" width="13.6" height="8.6" fill="#7db9e9" stroke="#0b4a7d" stroke-width="1.3"/><circle cx="21.1" cy="17.6" r="5.6" fill="url(#gb)" stroke="#0b4a7d" stroke-width="1.05"/></svg>
<div class="t" style="left:31px;top:130px">Copy Machine</div>
<div class="t" style="left:207px;top:130px">Inches</div>
<div class="sel" style="left:29px;top:150px;width:516px;height:24px"></div>
<svg class="a" style="left:0px;top:150px" width="28" height="25" viewBox="0 0 28 25"><path d="M14.3 17 V0.7 H21 L24.3 4 V15 Z" fill="#7db9e9"/><path d="M22.6 0.3 L24.9 2.4" stroke="#8cc4f0" stroke-width="1"/><path d="M14.3 17 V0.7 H21 L24.3 4 V15" fill="none" stroke="#0b4a7d" stroke-width="1.25"/><path d="M20.6 0.7 V4.6 H24.3" fill="none" stroke="#0b4a7d" stroke-width="1.1"/><rect x="5.6" y="10.7" width="13.6" height="8.6" fill="#7db9e9" stroke="#0b4a7d" stroke-width="1.3"/><circle cx="21.1" cy="17.6" r="5.6" fill="url(#gb)" stroke="#0b4a7d" stroke-width="1.05"/></svg>
<div class="t" style="left:31px;top:155px">Desk - 30 x 60 in.</div>
<div class="t" style="left:207px;top:155px">Inches</div>
<div class="sel" style="left:29px;top:175px;width:516px;height:24px"></div>
<svg class="a" style="left:0px;top:175px" width="28" height="25" viewBox="0 0 28 25"><path d="M14.3 17 V0.7 H21 L24.3 4 V15 Z" fill="#7db9e9"/><path d="M22.6 0.3 L24.9 2.4" stroke="#8cc4f0" stroke-width="1"/><path d="M14.3 17 V0.7 H21 L24.3 4 V15" fill="none" stroke="#0b4a7d" stroke-width="1.25"/><path d="M20.6 0.7 V4.6 H24.3" fill="none" stroke="#0b4a7d" stroke-width="1.1"/><rect x="5.6" y="10.7" width="13.6" height="8.6" fill="#7db9e9" stroke="#0b4a7d" stroke-width="1.3"/><circle cx="21.1" cy="17.6" r="5.6" fill="url(#gb)" stroke="#0b4a7d" stroke-width="1.05"/></svg>
<div class="t" style="left:31px;top:180px">Phone - Desk</div>
<div class="t" style="left:207px;top:180px">Inches</div>
<div class="sel" style="left:29px;top:200px;width:516px;height:24px"></div>
<svg class="a" style="left:0px;top:200px" width="28" height="25" viewBox="0 0 28 25"><path d="M14.3 17 V0.7 H21 L24.3 4 V15 Z" fill="#7db9e9"/><path d="M22.6 0.3 L24.9 2.4" stroke="#8cc4f0" stroke-width="1"/><path d="M14.3 17 V0.7 H21 L24.3 4 V15" fill="none" stroke="#0b4a7d" stroke-width="1.25"/><path d="M20.6 0.7 V4.6 H24.3" fill="none" stroke="#0b4a7d" stroke-width="1.1"/><rect x="5.6" y="10.7" width="13.6" height="8.6" fill="#7db9e9" stroke="#0b4a7d" stroke-width="1.3"/><circle cx="21.1" cy="17.6" r="5.6" fill="url(#gb)" stroke="#0b4a7d" stroke-width="1.05"/></svg>
<div class="t" style="left:31px;top:205px">Dining Set - 36 x 72 in.</div>
<div class="t" style="left:207px;top:205px">Inches</div>
</div>
<div class="btn" style="left:514px;top:102px;width:189px;height:56px;border:2px solid #0078d7"></div>
<div class="t" style="left:553px;top:122px">Add</div>
<svg class="a" style="left:648px;top:124px" width="20" height="12" viewBox="0 0 20 12"><path d="M2.6 4.6 H14.3 V2.6 L17.6 6 L14.3 9.4 V7.4 H2.6 Z" fill="url(#ag)" stroke="#3a8a00" stroke-width="1.2" stroke-linejoin="round"/></svg>
<div class="btn" style="left:514px;top:167px;width:189px;height:88px"></div>
<div class="t" style="left:514px;top:179px;width:189px;text-align:center;white-space:normal;line-height:15px">Select blocks from current<br>drawing screen</div>
<svg class="a" style="left:598px;top:229px" width="20" height="12" viewBox="0 0 20 12"><path d="M2.6 4.6 H14.3 V2.6 L17.6 6 L14.3 9.4 V7.4 H2.6 Z" fill="url(#ag)" stroke="#3a8a00" stroke-width="1.2" stroke-linejoin="round"/></svg>
<div class="btn" style="left:514px;top:265px;width:189px;height:99px"></div>
<div class="t" style="left:557px;top:298px">Browse for block</div>
<div class="t" style="left:565px;top:313.5px">drawing files</div>
<svg class="a" style="left:526px;top:304px" width="20" height="20" viewBox="0 0 20 20"><defs><linearGradient id="fg" x1="0" y1="0" x2="1" y2="1"><stop offset="0" stop-color="#ffe070"/><stop offset="1" stop-color="#f0a010"/></linearGradient><linearGradient id="fb" x1="0" y1="0" x2="0" y2="1"><stop offset="0" stop-color="#fff0a0"/><stop offset="1" stop-color="#f0c850"/></linearGradient></defs><path d="M2.6 16.6 V5.6 Q2.6 5.2 3 5.2 H8.4 L9.3 7.2 H14.7 V9.4" fill="url(#fb)" stroke="#857560" stroke-width="0.9"/><path d="M6.4 9.6 H17.6 L14.6 16.6 H2.6 Z" fill="url(#fg)" stroke="#6a5a40" stroke-width="0.9" stroke-linejoin="round"/><path d="M2.6 16.6 H14.6" stroke="#222" stroke-width="0.9"/><path d="M11.3 4.6 Q14 2 16.6 5.2" fill="none" stroke="#3a62a8" stroke-width="1.1"/><path d="M15.2 7 L18 4 L18.2 7.6 Z" fill="#3a62a8"/></svg>
<div class="t" style="left:515px;top:503px;color:#ff0000;line-height:15.3px">Current Drawing is Unitless.
It is recommended to setup
your drawing unit first, via
AutoCAD UNITS command.</div>
<div class="t" style="left:515px;top:660px">Current Drawing Unit:</div>
<div class="t" style="left:515px;top:692px">Unitless</div>
<div class="t" style="left:515px;top:726px">&lt;&lt; Block name filter</div>
<div class="a" style="left:512px;top:748px;width:191px;height:23px;background:#fff;border:1px solid #7a7a7a"></div>
<div class="btn" style="left:729px;top:726px;width:241px;height:44px"></div>
<svg class="a" style="left:745px;top:738px" width="20" height="20" viewBox="0 0 20 20"><path d="M4.1 4.8 L14.1 14.9 M14.1 4.8 L4.1 14.9" stroke="#7a0000" stroke-width="3.7" stroke-linecap="square"/><path d="M4.1 4.8 L14.1 14.9 M14.1 4.8 L4.1 14.9" stroke="#ff6868" stroke-width="1.9" stroke-linecap="square"/><circle cx="9.1" cy="9.85" r="1.3" fill="#ff1010"/></svg>
<div class="t" style="left:776px;top:740px">Remove selected items</div>
<div class="btn" style="left:1122px;top:726px;width:134px;height:44px"></div>
<div class="t" style="left:1179px;top:740px">OK</div>
<div class="btn" style="left:1266px;top:726px;width:138px;height:44px"></div>
<div class="t" style="left:1313px;top:740px">Cancel</div>
</body></html>
